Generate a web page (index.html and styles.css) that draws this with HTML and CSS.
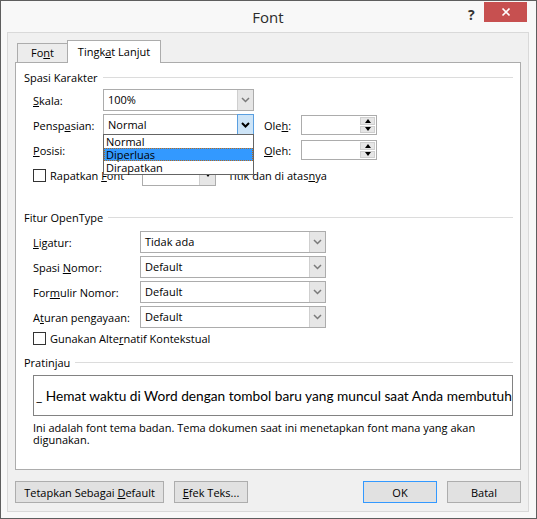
FILE: index.html
```html
<!DOCTYPE html>
<html lang="id">
<head>
<meta charset="utf-8">
<title>Font</title>
<link rel="stylesheet" href="styles.css">
</head>
<body>
<div class="window">
  <div class="titlebar">
    <div class="title">Font</div>
    <div class="help">?</div>
    <div class="close"><svg width="10" height="10" viewBox="0 0 10 10"><path d="M1.5 1.5L8.5 8.5M8.5 1.5L1.5 8.5" stroke="#fff" stroke-width="1.7" fill="none"/></svg></div>
  </div>
  <div class="client">
    <div class="tabs">
      <div class="tab"><span>Fo<u>n</u>t</span></div>
      <div class="tab active"><span>Tingk<u>a</u>t Lanjut</span></div>
    </div>
    <div class="panel">
      <div class="group-head"><span>Spasi Karakter</span><i class="rule"></i></div>
      <div class="char-grid">
        <div class="lbl c1"><span><u>S</u>kala:</span></div>
        <div class="combo c2"><span class="val">100%</span><span class="btn"><svg width="9" height="6" viewBox="0 0 9 6"><path d="M1 1L4.5 4.5L8 1" stroke="#7a7a7a" stroke-width="1.5" fill="none"/></svg></span></div>

        <div class="lbl c1"><span>Pensp<u>a</u>sian:</span></div>
        <div class="combo c2"><span class="val">Normal</span><span class="btn hot"><svg width="9" height="6" viewBox="0 0 9 6"><path d="M1 1L4.5 4.5L8 1" stroke="#000" stroke-width="2" fill="none"/></svg></span></div>
        <div class="lbl oleh"><span>Ole<u>h</u>:</span></div>
        <div class="spin"><span class="spin-val"></span><span class="spin-btns"><span><i class="up"></i></span><span><i class="down"></i></span></span></div>

        <div class="lbl c1"><span><u>P</u>osisi:</span></div>
        <div class="combo c2"><span class="val">Normal</span><span class="btn"><svg width="9" height="6" viewBox="0 0 9 6"><path d="M1 1L4.5 4.5L8 1" stroke="#7a7a7a" stroke-width="1.5" fill="none"/></svg></span></div>
        <div class="lbl oleh"><span><u>O</u>leh:</span></div>
        <div class="spin"><span class="spin-val"></span><span class="spin-btns"><span><i class="up"></i></span><span><i class="down"></i></span></span></div>

        <div class="kern-row">
          <div class="kern-label"><span class="check"></span><span>Rapatkan <u>F</u>ont</span></div>
          <div class="combo small"><span class="val"></span><span class="btn"><i class="down"></i></span></div>
          <span class="kern-after">Titik dan di atas<u>n</u>ya</span>
        </div>

        <div class="dropdown">
          <div class="item">Normal</div>
          <div class="item sel">Diperluas</div>
          <div class="item">Dirapatkan</div>
        </div>
      </div>

      <div class="group-head g2"><span>Fitur OpenType</span><i class="rule"></i></div>
      <div class="ot-grid">
        <div class="lbl"><span><u>L</u>igatur:</span></div>
        <div class="combo"><span class="val">Tidak ada</span><span class="btn"><svg width="9" height="6" viewBox="0 0 9 6"><path d="M1 1L4.5 4.5L8 1" stroke="#7a7a7a" stroke-width="1.5" fill="none"/></svg></span></div>
        <div class="lbl"><span>Spasi <u>N</u>omor:</span></div>
        <div class="combo"><span class="val">Default</span><span class="btn"><svg width="9" height="6" viewBox="0 0 9 6"><path d="M1 1L4.5 4.5L8 1" stroke="#7a7a7a" stroke-width="1.5" fill="none"/></svg></span></div>
        <div class="lbl"><span>For<u>m</u>ulir Nomor:</span></div>
        <div class="combo"><span class="val">Default</span><span class="btn"><svg width="9" height="6" viewBox="0 0 9 6"><path d="M1 1L4.5 4.5L8 1" stroke="#7a7a7a" stroke-width="1.5" fill="none"/></svg></span></div>
        <div class="lbl"><span>A<u>t</u>uran pengayaan:</span></div>
        <div class="combo"><span class="val">Default</span><span class="btn"><svg width="9" height="6" viewBox="0 0 9 6"><path d="M1 1L4.5 4.5L8 1" stroke="#7a7a7a" stroke-width="1.5" fill="none"/></svg></span></div>
      </div>
      <div class="check-row"><span class="check"></span><span>Gunakan Alte<u>r</u>natif Kontekstual</span></div>

      <div class="group-head g3"><span>Pratinjau</span><i class="rule"></i></div>
      <div class="preview"><span>_ Hemat waktu di Word dengan tombol baru yang muncul saat Anda membutuhkannya.</span></div>
      <p class="desc">Ini adalah font tema badan. Tema dokumen saat ini menetapkan font mana yang akan digunakan.</p>
    </div>
    <div class="buttons">
      <div class="button wide"><span>Tetapkan Sebagai <u>D</u>efault</span></div>
      <div class="button"><span><u>E</u>fek Teks...</span></div>
      <div class="button ok"><span>OK</span></div>
      <div class="button"><span>Batal</span></div>
    </div>
  </div>
</div>
</body>
</html>
```

FILE: styles.css
```css
* { box-sizing: border-box; margin: 0; padding: 0; }
html, body { width: 537px; height: 519px; overflow: hidden; }
body {
  font-family: "Open Sans", "Noto Sans", sans-serif;
  font-size: 11px;
  color: #000;
  background: #f8f8f8;
}
u { text-decoration: underline; text-underline-offset: 1px; }
i { display: block; font-style: normal; }

.window {
  width: 537px;
  height: 519px;
  border: 1px solid #5e5e5e;
  background: #f8f8f8;
  padding: 0 7px 6px 6px;
  display: flex;
  flex-direction: column;
}

.titlebar { position: relative; height: 31px; flex: none; }
.title { text-align: center; font-size: 15px; line-height: 31px; color: #2b2b2b; padding-top: 1px; }
.help { position: absolute; left: 461px; top: 4px; font-weight: 700; font-size: 14px; color: #333; }
.close {
  position: absolute; left: 477px; top: 1px; width: 43px; height: 20px;
  background: #c75050; display: flex; align-items: center; justify-content: center;
}

.client {
  flex: 1;
  border: 1px solid #d9d9d9;
  background: #f0f0f0;
  padding: 7px 7px 8px 7px;
  display: flex;
  flex-direction: column;
}

.tabs { display: flex; align-items: flex-end; height: 22px; padding-left: 2px; position: relative; z-index: 1; }
.tab {
  height: 19px; width: 50px;
  border: 1px solid #acacac; border-bottom: none; border-right: none;
  background: #ececec;
  text-align: center; line-height: 18px;
}
.tab.active {
  height: 23px; width: 94px; margin-bottom: -1px;
  border-right: 1px solid #acacac;
  background: #fff; line-height: 21px;
}

.panel {
  height: 408px;
  flex: none;
  border: 1px solid #acacac;
  background: #fff;
  padding: 0 7px 0 8px;
}

.group-head { display: flex; align-items: center; height: 16px; margin-top: 6px; gap: 5px; }
.group-head .rule { flex: 1; height: 1px; background: #dcdcdc; }
.group-head.g2 { margin-top: 23px; }
.group-head.g3 { margin-top: 8px; }

.lbl { display: flex; align-items: center; white-space: nowrap; }

.char-grid {
  position: relative;
  margin: 4px 0 0 9px;
  display: grid;
  grid-template-columns: 70px 151px 10px 37px 76px;
  grid-template-rows: repeat(4, 22px);
  row-gap: 3px;
}
.char-grid .c1 { grid-column: 1; }
.char-grid .c2 { grid-column: 2; }
.char-grid .oleh { grid-column: 4; }
.char-grid .spin { grid-column: 5; }

.combo {
  display: flex; height: 22px;
  border: 1px solid #acacac; background: #fff;
}
.combo .val { flex: 1; padding-left: 4px; line-height: 20px; white-space: nowrap; }
.combo .btn {
  width: 16px; background: #e6e6e6; border-left: 1px solid #cfcfcf;
  display: flex; align-items: center; justify-content: center;
}
.combo .btn.hot { background: #cde4f7; border: 1px solid #5a9fe0; margin: -1px -1px -1px 0; width: 17px; }

.spin {
  align-self: center; height: 20px; display: flex;
  border: 1px solid #acacac; background: #fff;
}
.spin-val { flex: 1; }
.spin-btns { width: 15px; margin: 1px 1px 1px 0; display: flex; flex-direction: column; gap: 1px; }
.spin-btns span {
  flex: 1; background: #e6e6e6; border: 1px solid #cfcfcf;
  display: flex; align-items: center; justify-content: center;
}
.up { width: 0; height: 0; border-left: 3.5px solid transparent; border-right: 3.5px solid transparent; border-bottom: 4px solid #000; }
.down { width: 0; height: 0; border-left: 3.5px solid transparent; border-right: 3.5px solid transparent; border-top: 4px solid #000; }

.kern-row { grid-column: 1 / -1; display: flex; align-items: center; }
.kern-label { width: 109px; display: flex; align-items: center; gap: 4px; white-space: nowrap; }
.combo.small { width: 74px; height: 21px; }
.kern-after { margin-left: 12px; white-space: nowrap; }

.check { width: 13px; height: 13px; border: 1px solid #333; background: #fff; flex: none; }

.dropdown {
  position: absolute; left: 70px; top: 45px; width: 151px; height: 41px;
  border: 1px solid #646464; background: #fff; z-index: 2;
}
.dropdown .item { height: 13px; line-height: 13px; padding-left: 2px; white-space: nowrap; }
.dropdown .item.sel { background: #3399ff; outline: 1px dotted #b86a1c; outline-offset: -1px; }

.ot-grid {
  margin: 6px 0 0 9px;
  display: grid;
  grid-template-columns: 107px 186px;
  grid-template-rows: repeat(4, 22px);
  row-gap: 3px;
}

.check-row { margin: 3px 0 0 9px; height: 15px; display: flex; align-items: center; gap: 4px; }

.preview {
  margin: 5px 0 0 9px; height: 41px;
  border: 1px solid #828282;
  overflow: hidden; white-space: nowrap;
  display: flex; align-items: center; padding-left: 2px;
  font-family: Lato, "Open Sans", sans-serif; font-size: 13.7px;
}
.desc { margin: 6px 0 0 9px; line-height: 12px; }

.buttons { display: flex; gap: 10px; margin-top: 11px; height: 22px; }
.button {
  width: 74px; height: 22px;
  background: #e1e1e1; border: 1px solid #adadad;
  display: flex; align-items: center; justify-content: center; white-space: nowrap;
}
.button.wide { width: 149px; }
.button.ok { margin-left: auto; border-color: #3399ff; }
```
